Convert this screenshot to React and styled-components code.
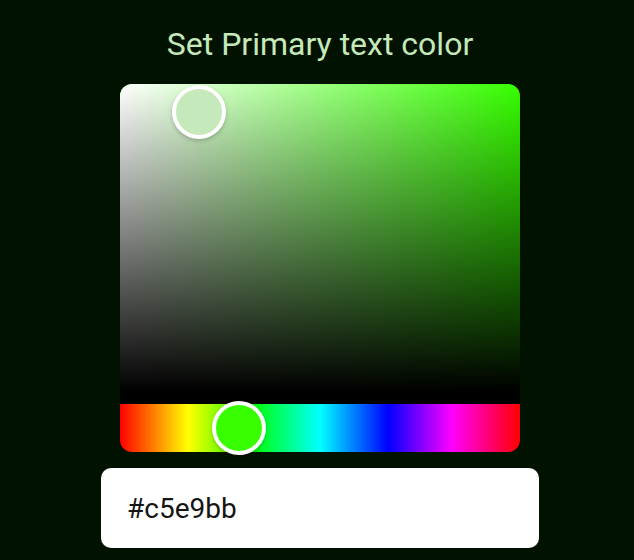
import React from 'react';
import styled, { createGlobalStyle } from 'styled-components';

const GlobalStyle = createGlobalStyle`
  html, body {
    margin: 0;
    padding: 0;
    background: #011201;
    font-family: Roboto, 'Liberation Sans', sans-serif;
  }
`;

const HEX = '#c5e9bb';
const HUE = 107;
const SAT = 0.197;
const VAL = 0.914;

const Page = styled.div`
  min-height: 560px;
  display: flex;
  flex-direction: column;
  align-items: center;
  padding-left: 6px;
  box-sizing: border-box;
`;

const Title = styled.h2`
  margin: 25px 0 0;
  font-size: 32px;
  font-weight: 400;
  line-height: 38px;
  color: ${HEX};
`;

const Picker = styled.div`
  position: relative;
  width: 400px;
  margin-top: 21px;
  display: flex;
  flex-direction: column;
`;

const Saturation = styled.div`
  position: relative;
  height: 320px;
  border-radius: 12px 12px 0 0;
  border-bottom: 12px solid #000;
  box-sizing: border-box;
  background-color: hsl(${HUE}, 100%, 50%);
  background-image: linear-gradient(to top, #000, rgba(0, 0, 0, 0)),
    linear-gradient(to right, #fff, rgba(255, 255, 255, 0));
`;

const Hue = styled.div`
  position: relative;
  height: 48px;
  border-radius: 0 0 12px 12px;
  background: linear-gradient(
    to right,
    #f00 0%,
    #ff0 17%,
    #0f0 33%,
    #0ff 50%,
    #00f 67%,
    #f0f 83%,
    #f00 100%
  );
`;

const Pointer = styled.div`
  position: absolute;
  width: 54px;
  height: 54px;
  box-sizing: border-box;
  border-radius: 50%;
  border: 4px solid #fff;
  transform: translate(-50%, -50%);
  box-shadow: 0 2px 4px rgba(0, 0, 0, 0.2);
  background: ${(p) => p.$fill};
`;

const HexInput = styled.input`
  margin-top: 16px;
  width: 438px;
  height: 80px;
  box-sizing: border-box;
  border: none;
  border-radius: 10px;
  background: #fff;
  padding: 0 0 0 26px;
  font-family: Roboto, 'Liberation Sans', sans-serif;
  font-size: 28px;
  color: #151515;
  outline: none;
`;

export default function App() {
  return (
    <>
      <GlobalStyle />
      <Page>
        <Title>Set Primary text color</Title>
        <Picker>
          <Saturation>
            <Pointer
              $fill={HEX}
              style={{ left: `${SAT * 100}%`, top: `${(1 - VAL) * 320}px` }}
            />
          </Saturation>
          <Hue>
            <Pointer
              $fill={`hsl(${HUE}, 100%, 50%)`}
              style={{ left: `${(HUE / 360) * 100}%`, top: '50%' }}
            />
          </Hue>
        </Picker>
        <HexInput defaultValue={HEX} />
      </Page>
    </>
  );
}
